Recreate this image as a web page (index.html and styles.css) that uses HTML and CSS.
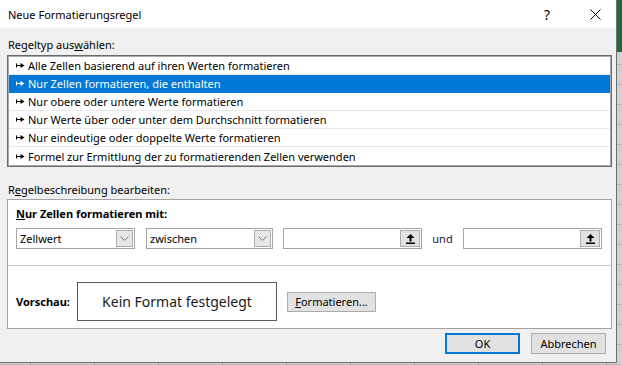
FILE: index.html
```html
<!DOCTYPE html>
<html lang="de">
<head>
    <meta charset="UTF-8">
    <title>Neue Formatierungsregel</title>
    <link rel="stylesheet" href="styles.css">
</head>
<body>
    <div class="dialog">
        <div class="titlebar">
            <span class="title">Neue Formatierungsregel</span>
            <span class="help">?</span>
            <svg class="close" width="11" height="11" viewBox="0 0 11 11">
                <path d="M0.5 0.5 L10.5 10.5 M10.5 0.5 L0.5 10.5" stroke="#000" stroke-width="1" fill="none"/>
            </svg>
        </div>

        <div class="content">
            <div class="section-label">Regeltyp aus<u>w</u>ählen:</div>
            <ul class="rule-list">
                <li><svg class="bullet" width="9" height="7" viewBox="0 0 9 7"><path d="M0 1.5h1v4H0z M1 3h4v1H1z M4.5 1 L8.5 3.5 L4.5 6z"/></svg>Alle Zellen basierend auf ihren Werten formatieren</li>
                <li class="selected"><svg class="bullet" width="9" height="7" viewBox="0 0 9 7"><path d="M0 1.5h1v4H0z M1 3h4v1H1z M4.5 1 L8.5 3.5 L4.5 6z"/></svg>Nur Zellen formatieren, die enthalten</li>
                <li><svg class="bullet" width="9" height="7" viewBox="0 0 9 7"><path d="M0 1.5h1v4H0z M1 3h4v1H1z M4.5 1 L8.5 3.5 L4.5 6z"/></svg>Nur obere oder untere Werte formatieren</li>
                <li><svg class="bullet" width="9" height="7" viewBox="0 0 9 7"><path d="M0 1.5h1v4H0z M1 3h4v1H1z M4.5 1 L8.5 3.5 L4.5 6z"/></svg>Nur Werte über oder unter dem Durchschnitt formatieren</li>
                <li><svg class="bullet" width="9" height="7" viewBox="0 0 9 7"><path d="M0 1.5h1v4H0z M1 3h4v1H1z M4.5 1 L8.5 3.5 L4.5 6z"/></svg>Nur eindeutige oder doppelte Werte formatieren</li>
                <li><svg class="bullet" width="9" height="7" viewBox="0 0 9 7"><path d="M0 1.5h1v4H0z M1 3h4v1H1z M4.5 1 L8.5 3.5 L4.5 6z"/></svg>Formel zur Ermittlung der zu formatierenden Zellen verwenden</li>
            </ul>

            <div class="section-label second">R<u>e</u>gelbeschreibung bearbeiten:</div>
            <div class="desc-box">
                <div class="desc-title"><u>N</u>ur Zellen formatieren mit:</div>
                <div class="controls">
                    <div class="combo combo-value">
                        <span>Zellwert</span>
                        <span class="drop-btn"><svg width="9" height="5" viewBox="0 0 9 5"><path d="M0.5 0.5 L4.5 4.5 L8.5 0.5" stroke="#7a7a7a" fill="none"/></svg></span>
                    </div>
                    <div class="combo combo-op">
                        <span>zwischen</span>
                        <span class="drop-btn"><svg width="9" height="5" viewBox="0 0 9 5"><path d="M0.5 0.5 L4.5 4.5 L8.5 0.5" stroke="#7a7a7a" fill="none"/></svg></span>
                    </div>
                    <div class="ref-field">
                        <span class="ref-btn"><svg width="9" height="10" viewBox="0 0 9 10"><path d="M4.5 0 L8.5 4 H5.5 V7.5 H3.5 V4 H0.5z M0 8.5 H9 V10 H0z"/></svg></span>
                    </div>
                    <span class="und">und</span>
                    <div class="ref-field">
                        <span class="ref-btn"><svg width="9" height="10" viewBox="0 0 9 10"><path d="M4.5 0 L8.5 4 H5.5 V7.5 H3.5 V4 H0.5z M0 8.5 H9 V10 H0z"/></svg></span>
                    </div>
                </div>
                <div class="separator"></div>
                <div class="preview-row">
                    <span class="preview-label">Vorschau:</span>
                    <div class="preview-box">Kein Format festgelegt</div>
                    <button class="btn format-btn"><u>F</u>ormatieren...</button>
                </div>
            </div>

            <div class="footer">
                <button class="btn default-btn">OK</button>
                <button class="btn">Abbrechen</button>
            </div>
        </div>
    </div>
</body>
</html>
```

FILE: styles.css
```css
* {
    box-sizing: border-box;
}

body {
    margin: 0;
    width: 622px;
    height: 365px;
    overflow: hidden;
    font-family: "Noto Sans", "Open Sans", sans-serif;
    font-size: 11px;
    color: #000;
    /* excel sheet behind the dialog */
    background:
        linear-gradient(#1e6b40, #1e6b40) right top / 5px 52px no-repeat,
        repeating-linear-gradient(90deg, #a3a3a3 0 1px, transparent 1px 64px) 30px 0 / 100% 100%,
        repeating-linear-gradient(0deg, #b8b8b8 0 1px, transparent 1px 20px),
        #d1d1d1;
}

.dialog {
    width: 617px;
    height: 363px;
    background: #f0f0f0;
    border-right: 1px solid #6e6e6e;
    border-bottom: 1px solid #6e6e6e;
}

.titlebar {
    height: 28px;
    background: #fff;
    display: flex;
    align-items: center;
    padding-left: 8px;
}

.title {
    flex: 1;
}

.help {
    width: 20px;
    text-align: center;
    font-size: 14px;
    margin-right: 33px;
}

.close {
    margin-right: 15px;
}

.content {
    padding: 9px 4px 0 7px;
}

.section-label {
    height: 16px;
    line-height: 16px;
    padding-left: 1px;
}

.section-label.second {
    margin-top: 15px;
}

.rule-list {
    list-style: none;
    margin: 2px 0 0;
    background: #fff;
    border: 1px solid #6a6a6a;
    box-shadow: inset 0 0 0 1px #a9a9a9;
    padding: 1px;
}

.rule-list li {
    height: 18px;
    line-height: 17px;
    padding-left: 7px;
    border-bottom: 1px solid #e9e9e9;
    display: flex;
    align-items: center;
    white-space: nowrap;
}

.rule-list li:last-child {
    border-bottom: none;
}

.rule-list li.selected {
    background: #0078d7;
    color: #fff;
    border-bottom-color: #0078d7;
}

.bullet {
    margin-right: 3px;
    fill: currentColor;
    flex-shrink: 0;
}

.desc-box {
    margin-top: 1px;
    height: 130px;
    background: #fff;
    border: 1px solid #a3a3a3;
    padding: 6px 0 0;
}

.desc-title {
    height: 16px;
    line-height: 16px;
    font-weight: bold;
    padding-left: 8px;
}

.controls {
    display: flex;
    align-items: center;
    margin-top: 6px;
    padding-left: 8px;
    height: 21px;
}

.combo {
    height: 21px;
    border: 1px solid #a5a5a5;
    background: #fff;
    display: flex;
    align-items: center;
    justify-content: space-between;
    padding: 0 1px 0 3px;
}

.combo-value {
    width: 119px;
    margin-right: 11px;
}

.combo-op {
    width: 127px;
    margin-right: 10px;
}

.drop-btn {
    width: 17px;
    height: 17px;
    background: #e6e6e6;
    border: 1px solid #acacac;
    display: flex;
    align-items: center;
    justify-content: center;
}

.ref-field {
    width: 139px;
    height: 21px;
    border: 1px solid #a5a5a5;
    background: #fff;
    display: flex;
    justify-content: flex-end;
    align-items: center;
    padding-right: 1px;
}

.ref-btn {
    width: 20px;
    height: 17px;
    background: #e1e1e1;
    border: 1px solid #adadad;
    display: flex;
    align-items: center;
    justify-content: center;
}

.und {
    width: 41px;
    text-align: center;
    color: #1a1a3a;
}

.separator {
    margin-top: 16px;
    height: 1px;
    background: #c9c9c9;
}

.preview-row {
    display: flex;
    align-items: center;
    padding: 16px 0 0 8px;
}

.preview-label {
    width: 61px;
    font-weight: bold;
}

.preview-box {
    width: 200px;
    height: 39px;
    border: 1px solid #5a5a5a;
    display: flex;
    align-items: center;
    justify-content: center;
    font-size: 14px;
    color: #1a1a1a;
    margin-right: 10px;
}

.btn {
    height: 21px;
    width: 75px;
    padding: 0;
    background: #e1e1e1;
    border: 1px solid #adadad;
    font-family: inherit;
    font-size: 11px;
    color: #000;
}

.format-btn {
    width: 89px;
    height: 20px;
}

.footer {
    display: flex;
    justify-content: flex-end;
    gap: 11px;
    margin-top: 4px;
    padding-right: 6px;
}

.default-btn {
    border: 2px solid #0078d7;
}
```
